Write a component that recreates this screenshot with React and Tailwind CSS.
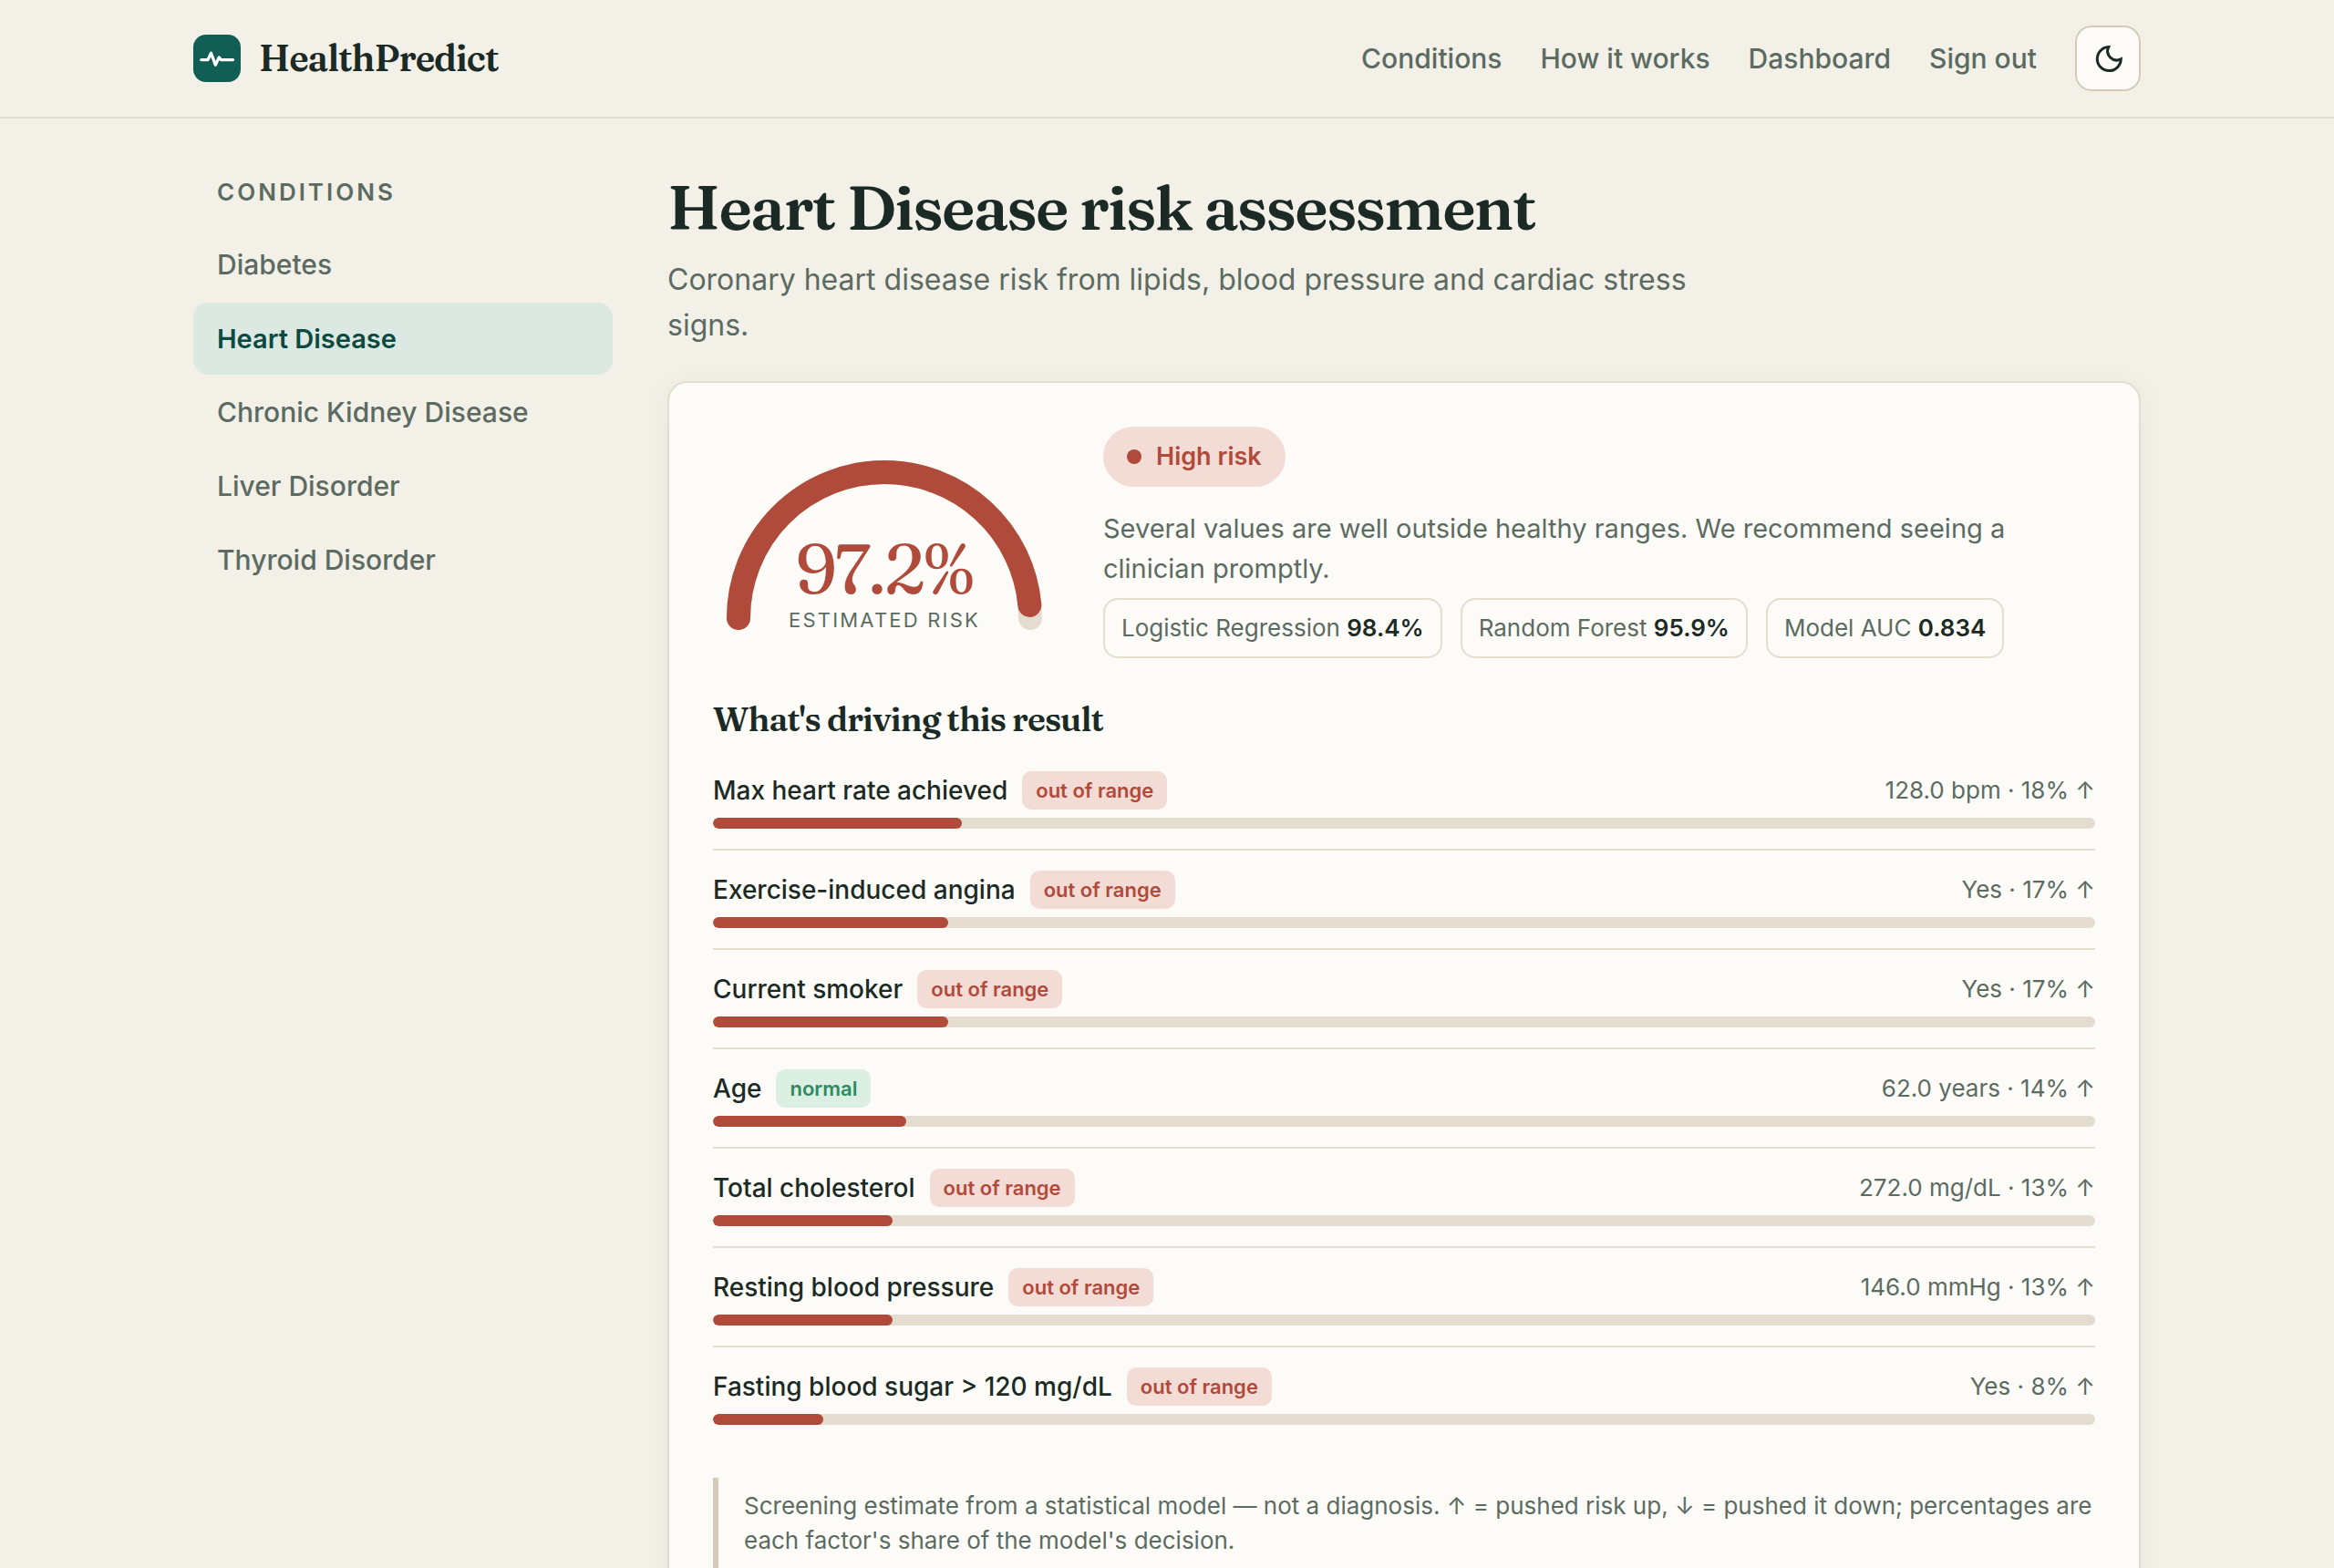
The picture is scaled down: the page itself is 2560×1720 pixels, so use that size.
const navLinks = ["Conditions", "How it works", "Dashboard", "Sign out"];

const conditions = [
  "Diabetes",
  "Heart Disease",
  "Chronic Kidney Disease",
  "Liver Disorder",
  "Thyroid Disorder",
];

const models = [
  { name: "Logistic Regression", value: "98.4%" },
  { name: "Random Forest", value: "95.9%" },
  { name: "Model AUC", value: "0.834" },
];

const drivers = [
  { name: "Max heart rate achieved", status: "out of range", value: "128.0 bpm", share: 18 },
  { name: "Exercise-induced angina", status: "out of range", value: "Yes", share: 17 },
  { name: "Current smoker", status: "out of range", value: "Yes", share: 17 },
  { name: "Age", status: "normal", value: "62.0 years", share: 14 },
  { name: "Total cholesterol", status: "out of range", value: "272.0 mg/dL", share: 13 },
  { name: "Resting blood pressure", status: "out of range", value: "146.0 mmHg", share: 13 },
  { name: "Fasting blood sugar > 120 mg/dL", status: "out of range", value: "Yes", share: 8 },
];

const serif = "font-['Fraunces','Liberation_Serif',serif] tracking-tight";

function Logo() {
  return (
    <svg viewBox="0 0 52 52" className="size-[52px]" aria-hidden="true">
      <rect width="52" height="52" rx="14" fill="#115e54" />
      <path
        d="M8.8 27.6H16l3.5-7.4 4.8 13 4-8.3 2 2.7h13.2"
        fill="none"
        stroke="#fff"
        strokeWidth="3.3"
        strokeLinecap="round"
        strokeLinejoin="round"
      />
    </svg>
  );
}

function Header() {
  return (
    <header className="border-b-2 border-[#e4dccf]">
      <div className="mx-auto flex w-full max-w-[2240px] items-center justify-between px-[52px] py-7">
        <a href="#home" className="flex items-center gap-5">
          <Logo />
          <span className={`${serif} text-[40px] leading-[54px] font-semibold`}>HealthPredict</span>
        </a>
        <nav className="flex items-center gap-[42px] text-[30px] font-medium text-[#5c6b62]">
          {navLinks.map((label) => (
            <a key={label} href="#nav" className="leading-[44px]">
              {label}
            </a>
          ))}
          <button
            type="button"
            aria-label="Switch to dark theme"
            className="flex size-[72px] items-center justify-center rounded-[18px] border-2 border-[#d6cbb6] bg-[#fcfbf7] text-[#1c2a26]"
          >
            <svg viewBox="19 19 34 34" className="size-[34px]" fill="none" stroke="currentColor" strokeWidth="3" aria-hidden="true">
              <path d="M36.7 23.6A13 13 0 1 0 50.3 36.8A10 10 0 0 1 36.7 23.6Z" />
            </svg>
          </button>
        </nav>
      </div>
    </header>
  );
}

function Sidebar() {
  return (
    <aside>
      <h2 className="mt-[9px] mb-5 px-[26px] text-[26px] leading-10 font-semibold tracking-[3px] text-[#5c6b62] uppercase">
        Conditions
      </h2>
      <nav className="flex flex-col gap-0.5">
        {conditions.map((name) => (
          <a
            key={name}
            href="#condition"
            className={`rounded-2xl px-[26px] py-[18px] leading-[43px] ${
              name === "Heart Disease"
                ? "bg-[#dce8e2] text-[29px] font-semibold text-[#0b4a41]"
                : "text-[30px] font-medium text-[#5c6b62]"
            }`}
          >
            {name}
          </a>
        ))}
      </nav>
    </aside>
  );
}

function Gauge() {
  const arc = "M28 188A160 160 0 0 1 348 188";
  return (
    <div className="grid w-[376px] shrink-0 self-center">
      <svg viewBox="0 0 376 210" className="col-start-1 row-start-1 w-full" fill="none" strokeWidth="26" strokeLinecap="round" aria-hidden="true">
        <path d={arc} stroke="#e4dccf" />
        <path d={arc} stroke="#b04a3a" pathLength="100" strokeDasharray="97.2 100" />
      </svg>
      <div className="col-start-1 row-start-1 self-end pb-[3px] text-center">
        <div className={`${serif} text-[76px] leading-[78px] text-[#b04a3a]`}>97.2%</div>
        <div className="text-[22px] leading-[34px] tracking-widest text-[#5c6b62] uppercase">Estimated risk</div>
      </div>
    </div>
  );
}

function Driver({ name, status, value, share }) {
  return (
    <li className="border-b-2 border-[#e4dccf] py-[22px] last:border-b-0">
      <div className="flex items-center justify-between leading-[42px]">
        <div className="flex items-center gap-4">
          <span className="text-[28px] font-medium">{name}</span>
          <span
            className={`rounded-[10px] px-[15px] py-1 text-[22px] leading-[34px] font-semibold ${
              status === "normal" ? "bg-[#dbefe3] text-[#2f8a63]" : "bg-[#f3dcd6] text-[#b04a3a]"
            }`}
          >
            {status}
          </span>
        </div>
        <span className="text-[26px] text-[#5c6b62]">
          {value} · {share}% ↑
        </span>
      </div>
      <div className="mt-[9px] h-3 overflow-hidden rounded-full bg-[#e4dccf]">
        <div className="h-full rounded-full bg-[#b04a3a]" style={{ width: `${share}%` }} />
      </div>
    </li>
  );
}

export default function App() {
  return (
    <div className="min-h-screen bg-[#f3f0e8] font-['Inter',sans-serif] text-[#1c2a26]">
      <Header />
      <div className="mx-auto grid w-full max-w-[2240px] grid-cols-[460px_minmax(0,1fr)] gap-[60px] px-[52px] py-[52px]">
        <Sidebar />
        <main>
          <h1 className={`${serif} text-[68px] leading-[90px] font-semibold`}>Heart Disease risk assessment</h1>
          <p className="mt-2.5 max-w-[1150px] text-[32px] leading-[50px] text-[#5c6b62]">
            Coronary heart disease risk from lipids, blood pressure and cardiac stress signs.
          </p>

          <section className="mt-9 rounded-[22px] border-2 border-[#e4dccf] bg-[#fcfbf7] p-12 shadow-[0_4px_32px_rgba(60,50,20,0.05)]">
            <div className="flex gap-[52px]">
              <Gauge />
              <div className="min-w-0 flex-1">
                <div className="inline-flex items-center gap-4 rounded-full bg-[#f3dcd6] px-[26px] py-3 align-top text-[27px] leading-[42px] font-semibold text-[#b04a3a]">
                  <span className="size-4 rounded-full bg-[#b04a3a]" />
                  High risk
                </div>
                <p className="mt-6 max-w-[1060px] text-[29px] leading-[44px] text-[#5c6b62]">
                  Several values are well outside healthy ranges. We recommend seeing a clinician promptly.
                </p>
                <div className="mt-2.5 flex flex-wrap gap-5">
                  {models.map((m) => (
                    <span
                      key={m.name}
                      className="rounded-2xl border-2 border-[#e4dccf] px-[18px] py-3 text-[26px] leading-[38px] text-[#5c6b62]"
                    >
                      {m.name} <strong className="font-semibold text-[#1c2a26]">{m.value}</strong>
                    </span>
                  ))}
                </div>
              </div>
            </div>

            <h2 className={`${serif} mt-10 mb-2 text-[37px] leading-[54px] font-semibold`}>What's driving this result</h2>
            <ul>
              {drivers.map((d) => (
                <Driver key={d.name} {...d} />
              ))}
            </ul>

            <p className="mt-9 border-l-[6px] border-[#d6cbb6] py-3 pl-7 text-[26px] leading-[38px] text-[#5c6b62]">
              Screening estimate from a statistical model — not a diagnosis. ↑ = pushed risk up, ↓ = pushed it down; percentages are each
              factor's share of the model's decision.
            </p>
          </section>
        </main>
      </div>
    </div>
  );
}
